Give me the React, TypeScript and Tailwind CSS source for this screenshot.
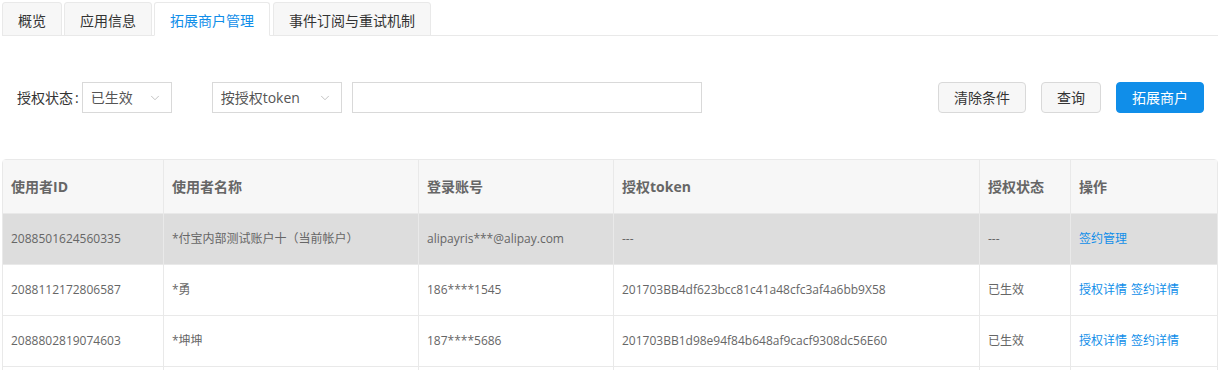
import { ChevronDown } from "lucide-react";

const tabs = ["概览", "应用信息", "拓展商户管理", "事件订阅与重试机制"];

const columns = [
  { title: "使用者ID", width: "w-[160px]" },
  { title: "使用者名称", width: "w-[255px]" },
  { title: "登录账号", width: "w-[195px]" },
  { title: "授权token", width: "w-[366px]" },
  { title: "授权状态", width: "w-[91px]" },
  { title: "操作", width: "w-[147px]" },
];

const rows = [
  {
    id: "2088501624560335",
    name: "*付宝内部测试账户十（当前帐户）",
    account: "alipayris***@alipay.com",
    token: "---",
    status: "---",
    actions: ["签约管理"],
    current: true,
  },
  {
    id: "2088112172806587",
    name: "*勇",
    account: "186****1545",
    token: "201703BB4df623bcc81c41a48cfc3af4a6bb9X58",
    status: "已生效",
    actions: ["授权详情", "签约详情"],
  },
  {
    id: "2088802819074603",
    name: "*坤坤",
    account: "187****5686",
    token: "201703BB1d98e94f84b648af9cacf9308dc56E60",
    status: "已生效",
    actions: ["授权详情", "签约详情"],
  },
  { id: "", name: "", account: "", token: "", status: "", actions: [] },
];

function Select({ label, width }: { label: string; width: string }) {
  return (
    <div className={`flex h-[31px] items-center justify-between border border-[#d9d9d9] bg-white pl-[8px] pr-[9px] text-[14px] text-[#555] ${width}`}>
      <span>{label}</span>
      <ChevronDown className="h-[14px] w-[14px] text-[#aaa]" strokeWidth={1.2} />
    </div>
  );
}

export default function App() {
  return (
    <div className="h-[370px] w-[1222px] overflow-hidden bg-white px-[2px] pt-[2px] font-['Open_Sans','Noto_Sans_CJK_SC',sans-serif]">
      <div className="flex w-[1216px] gap-[2px] border-b border-[#e9e9e9]">
        {tabs.map((tab, i) => (
          <div
            key={tab}
            className={`-mb-px flex h-[34px] items-center rounded-t-[3px] border px-[15px] pt-[3px] text-[14px] ${
              i === 2
                ? "border-[#e9e9e9] border-b-white bg-white text-[#108ee9]"
                : "border-[#e9e9e9] bg-[#f7f7f7] text-[#333]"
            } ${i === 3 ? "ml-px" : ""}`}
          >
            {tab}
          </div>
        ))}
      </div>

      <div className="mt-[46px] flex items-center pl-[15px] pr-[16px]">
        <span className="text-[14px] text-[#333]">
          授权状态<span className="ml-[2px]">:</span>
        </span>
        <div className="ml-[3px]">
          <Select label="已生效" width="w-[90px]" />
        </div>
        <div className="ml-[40px]">
          <Select label="按授权token" width="w-[130px]" />
        </div>
        <input className="ml-[10px] h-[31px] w-[350px] border border-[#d9d9d9] outline-none" />
        <div className="ml-auto flex gap-[15px] text-[14px]">
          <button className="h-[31px] w-[88px] rounded-[4px] border border-[#d9d9d9] bg-[#f7f7f7] text-[#333]">清除条件</button>
          <button className="h-[31px] w-[60px] rounded-[4px] border border-[#d9d9d9] bg-[#f7f7f7] text-[#333]">查询</button>
          <button className="h-[31px] w-[88px] rounded-[4px] border border-[#108ee9] bg-[#108ee9] text-white">拓展商户</button>
        </div>
      </div>

      <div className="mt-[46px] w-[1216px] rounded-t-[4px] border border-[#e9e9e9]">
        <div className="flex h-[53px] bg-[#f7f7f7] text-[14px] font-bold text-[#666]">
          {columns.map((col, i) => (
            <div key={col.title} className={`flex items-center pl-[8px] ${col.width} ${i > 0 ? "border-l border-[#e9e9e9]" : ""}`}>
              {col.title}
            </div>
          ))}
        </div>
        {rows.map((row, r) => {
          const cells = [row.id, row.name, row.account, row.token, row.status];
          return (
            <div key={r} className={`flex h-[51px] border-t border-[#e9e9e9] text-[12px] text-[#666] ${row.current ? "bg-[#dddddd]" : "bg-white"}`}>
              {cells.map((cell, i) => (
                <div key={i} className={`flex items-center pl-[8px] ${columns[i].width} ${i > 0 ? "border-l border-[#e9e9e9]" : ""}`}>
                  {cell}
                </div>
              ))}
              <div className={`flex items-center gap-[4px] border-l border-[#e9e9e9] pl-[8px] ${columns[5].width}`}>
                {row.actions.map((a) => (
                  <a key={a} className="cursor-pointer text-[#108ee9]">{a}</a>
                ))}
              </div>
            </div>
          );
        })}
      </div>
    </div>
  );
}
